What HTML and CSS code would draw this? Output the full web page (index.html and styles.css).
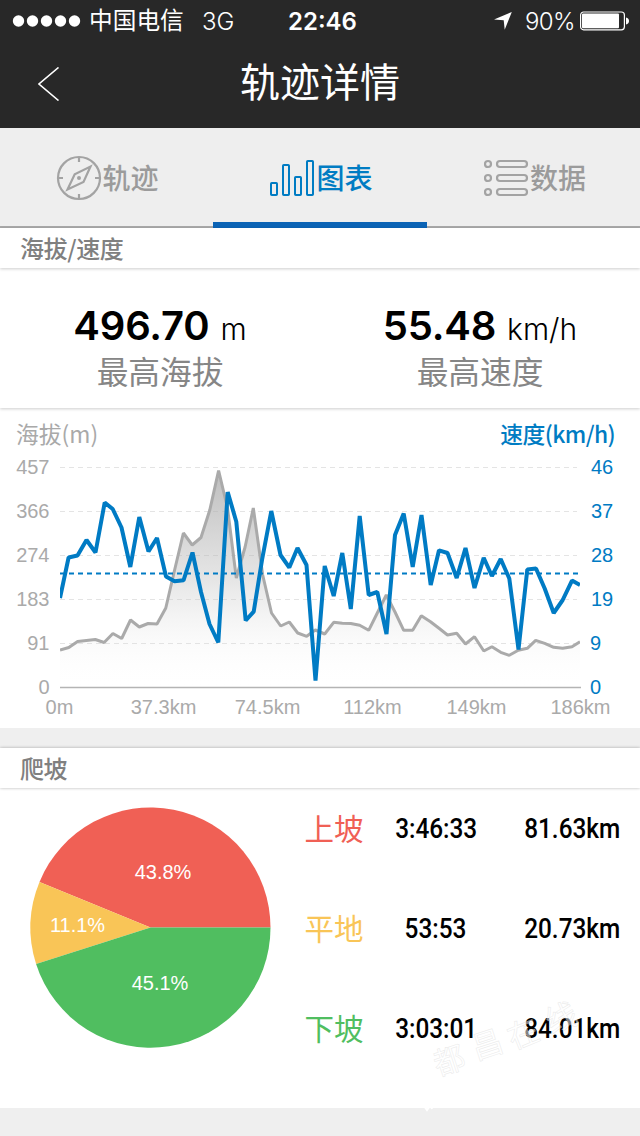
FILE: index.html
```html
<!DOCTYPE html>
<html lang="zh-CN">
<head>
<meta charset="utf-8">
<title>轨迹详情</title>
<link rel="stylesheet" href="styles.css">
</head>
<body>
<div class="app">
  <header class="top">
    <div class="status">
      <svg class="signal" width="70" height="14" viewBox="0 0 70 14" fill="#fff"><circle cx="6.5" cy="7" r="5.7"/><circle cx="20.5" cy="7" r="5.7"/><circle cx="34.5" cy="7" r="5.7"/><circle cx="48.5" cy="7" r="5.7"/><circle cx="62.5" cy="7" r="5.7"/></svg>
      <span class="carrier">中国电信</span>
      <span class="network">3G</span>
      <span class="clock">22:46</span>
      <svg class="location" width="18" height="18" viewBox="0 0 18 18" fill="#fff"><path d="M17.8 0 10.7 17.8 9.7 8.2 0 7.4Z"/></svg>
      <span class="percent">90%</span>
      <svg class="battery" width="50" height="20" viewBox="0 0 50 20"><rect x=".6" y="1" width="43.8" height="17.8" rx="3" fill="none" stroke="#fff" stroke-width="1.2"/><rect x="2" y="2.6" width="37" height="14.6" rx="1" fill="#fff"/><path d="M46 6.5c4 .5 4 6.500 0 7Z" fill="#fff"/></svg>
    </div>
    <div class="nav">
      <svg class="back" width="22" height="34" viewBox="0 0 22 34" fill="none" stroke="#fff" stroke-width="1.6"><path d="M20.500.5 1 17l19.500 16.500"/></svg>
      <h1 class="title">轨迹详情</h1>
    </div>
  </header>

  <nav class="tabs">
    <div class="tab track">
      <svg width="46" height="46" viewBox="0 0 46 46" fill="none" stroke="#a3a3a3" stroke-width="2.200"><circle cx="23" cy="23" r="21"/><path d="M23 2v5M23 44v-5M2 23h5M44 23h-5M34.500 11.500 27.500 27 11.500 34.500 18.700 19.200Z"/><circle cx="23" cy="23" r="2" fill="#a3a3a3" stroke="none"/></svg>
      <span>轨迹</span>
    </div>
    <div class="tab active">
      <svg width="46" height="46" viewBox="0 0 46 46" fill="none" stroke="#007cc3" stroke-width="2"><rect x="1" y="28" width="6" height="12" rx=".8"/><rect x="13" y="10" width="6" height="30" rx=".8"/><rect x="25" y="22" width="6" height="18" rx=".8"/><rect x="37" y="6" width="6" height="34" rx=".8"/></svg>
      <span>图表</span>
    </div>
    <div class="tab">
      <svg width="46" height="46" viewBox="0 0 46 46" fill="none" stroke="#a3a3a3" stroke-width="2.200"><circle cx="4" cy="9" r="3"/><circle cx="4" cy="23" r="3"/><circle cx="4" cy="37" r="3"/><rect x="13" y="6" width="30" height="6" rx="3"/><rect x="13" y="20" width="30" height="6" rx="3"/><rect x="13" y="34" width="30" height="6" rx="3"/></svg>
      <span>数据</span>
    </div>
  </nav>

  <h2 class="section-title">海拔/速度</h2>
  <section class="stats">
    <div class="stat">
      <div class="value"><b>496.70</b><span>m</span></div>
      <div class="label">最高海拔</div>
    </div>
    <div class="stat">
      <div class="value"><b>55.48</b><span>km/h</span></div>
      <div class="label">最高速度</div>
    </div>
  </section>

  <section class="chart">
    <div class="axis-titles"><span>海拔(m)</span><span class="speed">速度(km/h)</span></div>
    <svg class="plot" width="640" height="276" viewBox="0 452 640 276">
      <defs>
        <linearGradient id="fade" gradientUnits="userSpaceOnUse" x1="0" y1="470" x2="0" y2="688">
          <stop offset="0" stop-color="#aaa" stop-opacity=".78"/><stop offset=".5" stop-color="#bbb" stop-opacity=".38"/><stop offset=".8" stop-color="#ddd" stop-opacity=".12"/><stop offset="1" stop-color="#fff" stop-opacity="0"/>
        </linearGradient>
        <clipPath id="area"><rect x="60" y="458" width="520" height="231"/></clipPath>
      </defs>
      <path class="grid" d="M60 467.500H577M60 511.500H577M60 555.500H577M60 599.500H577M60 643.500H577"/>
      <g clip-path="url(#area)">
        <path fill="url(#fade)" d="M60 688V650L68.800 647.500 77.600 641.500 86.400 640.500 95.300 639.500 104.100 642.500 112.900 633.500 121.700 638.500 130.500 620 139.300 627 148.100 623.500 157 624 165.800 608 174.600 570 183.400 533 192.200 545 201 537.500 209.800 510 218.600 470.500 227.500 508 236.300 578 245.100 547 253.300 508 262.700 575 271.500 613 280.700 626 289.300 622 297.700 633 306.700 636.300 315.300 630 324.700 634 333.700 622.300 342.300 623.300 350.800 623.500 359.700 625.300 368.700 630.300 377.300 613 386.300 595 395 612 403.700 630.300 412.700 630.300 421.300 615.800 430.500 621.700 439 628.300 447.500 635 456.700 633.300 465.500 644 474.500 636.700 483.800 651 491.900 646.700 500.700 652.300 509.300 655.300 518.300 650.300 527.300 648.300 535.700 640.300 544.700 643.300 553.700 647.300 562.700 648.300 572 646.700 580 641.700V688Z"/>
        <path class="altitude" d="M60 650 68.800 647.500 77.600 641.500 86.400 640.500 95.300 639.500 104.100 642.500 112.900 633.500 121.700 638.500 130.500 620 139.300 627 148.100 623.500 157 624 165.800 608 174.600 570 183.400 533 192.200 545 201 537.500 209.800 510 218.600 470.500 227.500 508 236.300 578 245.100 547 253.300 508 262.700 575 271.500 613 280.700 626 289.300 622 297.700 633 306.700 636.300 315.300 630 324.700 634 333.700 622.300 342.300 623.300 350.800 623.500 359.700 625.300 368.700 630.300 377.300 613 386.300 595 395 612 403.700 630.300 412.700 630.300 421.300 615.800 430.500 621.700 439 628.300 447.500 635 456.700 633.300 465.500 644 474.500 636.700 483.800 651 491.900 646.700 500.700 652.300 509.300 655.300 518.300 650.300 527.300 648.300 535.700 640.300 544.700 643.300 553.700 647.300 562.700 648.300 572 646.700 580 641.700"/>
        <path class="average" d="M60 573.500H580"/>
        <path class="velocity" d="M60 598 68.600 557.500 77.500 555.500 86.500 540 95.500 552.500 104.700 502.500 112.700 509 121.500 527.500 130.300 567 139.300 517 148.500 551.500 157 538 166 576.500 174.500 581.300 183.500 580.300 192.500 552.500 201 592 209.500 624 218.300 642.500 227.700 492 236.300 521.700 245.700 620.500 253.700 611.700 262.300 558.300 271.300 511 280.500 555 289.300 567.500 297.500 548 306.500 565 315.500 680.500 324.700 566 333.700 596 342.300 553 350.800 609 359.700 516 368.700 595 377.300 592 386.500 634 395 535 403.700 513.500 412.700 567 421.500 515 430.700 585 439 550.300 447.500 553 456.700 578 465.500 548 474.500 588 483.700 557.800 491.900 576 500.700 559 509.300 578.500 518.500 649.500 527.300 569.500 536 568.500 544.700 588.500 553.700 613 562.700 600 572 580.600 580 585"/>
      </g>
      <path class="baseline" d="M60 687.500H581"/>
      <g class="ticks" text-anchor="end"><text x="49.500" y="474">457</text><text x="49.500" y="518">366</text><text x="49.500" y="562">274</text><text x="49.500" y="606">183</text><text x="49.500" y="650">91</text><text x="49.500" y="694">0</text></g>
      <g class="ticks blue"><text x="591" y="474">46</text><text x="591" y="518">37</text><text x="591" y="562">28</text><text x="591" y="606">19</text><text x="590" y="650">9</text><text x="590" y="694">0</text></g>
      <g class="ticks" text-anchor="middle"><text x="59.500" y="714">0m</text><text x="163.500" y="714">37.3km</text><text x="267.500" y="714">74.5km</text><text x="372.500" y="714">112km</text><text x="476.500" y="714">149km</text><text x="580.500" y="714">186km</text></g>
    </svg>
  </section>

  <h2 class="section-title slope-title">爬坡</h2>
  <section class="slope">
    <svg class="pie" width="300" height="320" viewBox="0 788 300 320">
      <path fill="#f06055" d="M150.500 927.500H270.500A120 120 0 0 0 39.500 881.900Z"/>
      <path fill="#f9c557" d="M150.500 927.500 39.500 881.900A120 120 0 0 0 36.100 963.900Z"/>
      <path fill="#50be60" d="M150.500 927.500 36.100 963.900A120 120 0 0 0 270.500 927.500Z"/>
      <g text-anchor="middle"><text x="163" y="879">43.8%</text><text x="77.500" y="932">11.1%</text><text x="160" y="990">45.1%</text></g>
    </svg>
    <div class="rows">
      <div class="row"><span class="kind up">上坡</span><span class="num"><i>3:46:33</i></span><span class="num"><i>81.63km</i></span></div>
      <div class="row"><span class="kind flat">平地</span><span class="num"><i>53:53</i></span><span class="num"><i>20.73km</i></span></div>
      <div class="row"><span class="kind down">下坡</span><span class="num"><i>3:03:01</i></span><span class="num"><i>84.01km</i></span></div>
    </div>
    <svg class="watermark" width="240" height="140" viewBox="400 980 240 140"><g><text transform="translate(438 1076) rotate(-18)">都</text><text transform="translate(476 1060) rotate(-18)">昌</text><text transform="translate(513 1050) rotate(-22)">在</text><text transform="translate(551 1034) rotate(-22)">线</text></g><path d="M424 1106l3 4 3-4M431 1106l1 3" fill="none" stroke="#fff" stroke-width="2"/></svg>
  </section>
</div>
</body>
</html>
```
FILE: styles.css
```css
* { box-sizing: border-box; }
body { margin: 0; background: #efefef; font-family: "Inter", "Noto Sans CJK SC", sans-serif; }
.app { width: 640px; height: 1136px; overflow: hidden; }
.top { height: 128px; background: #282828; color: #fff; }
.status { display: flex; align-items: center; height: 40px; padding: 1px 0 0 12px; font-size: 24px; line-height: 39px; white-space: nowrap; }
.signal { flex: none; }
.carrier { width: 96px; margin-left: 7px; font-family: "Noto Sans CJK SC", sans-serif; font-weight: 400; font-size: 23.700px; line-height: 36px; padding-bottom: 3px; }
.network { width: 86px; margin-left: 17px; font-weight: 300; padding-top: 1px; }
.clock { width: 76px; font-weight: 600; padding-top: 1px; }
.location { flex: none; margin-left: 130px; }
.percent { width: 50px; margin-left: 13px; font-weight: 300; letter-spacing: -.6px; padding-top: 1px; }
.battery { flex: none; margin-left: 5px; }
.nav { display: grid; grid-template-columns: 100px 1fr 100px; align-items: center; height: 88px; }
.back { margin-left: 38px; }
.title { margin: 0; font: 400 40px/80px "Noto Sans CJK SC", sans-serif; text-align: center; padding-bottom: 8px; }
.tabs { display: grid; grid-template-columns: 213px 214px 213px; height: 100px; background: #eee; }
.tab { display: flex; align-items: center; justify-content: center; border-bottom: 2px solid #a9a9a9; color: #9b9b9b; font: 500 28px/40px "Noto Sans CJK SC", sans-serif; padding: 2px 0 0 3px; }
.tab.track { padding-left: 2px; }
.tab.active { border-bottom: 6px solid #0b63b5; color: #007cc3; padding-top: 6px; }
.tab svg { flex: none; display: block; }
.tab span { padding-bottom: 3px; }
.section-title { position: relative; z-index: 1; margin: 0; height: 40px; padding-left: 20px; background: #fff; color: #808080; font: 500 24px/39px "Noto Sans CJK SC", sans-serif; letter-spacing: -.4px; box-shadow: 0 1px 3px rgba(0, 0, 0, .2); }
.stats { position: relative; display: grid; grid-template-columns: 1fr 1fr; height: 140px; padding-top: 34px; background: #fff; box-shadow: 0 1px 3px rgba(0, 0, 0, .2); clip-path: inset(0 0 -6px 0); }
.stat { text-align: center; }
.value { height: 46px; line-height: 48px; white-space: nowrap; color: #000; }
.value b { font-size: 40px; font-weight: 600; letter-spacing: -.2px; }
.value span { font-size: 30px; font-weight: 300; margin-left: 11px; }
.label { height: 44px; color: #868686; font: 400 31.700px/44px "Noto Sans CJK SC", sans-serif; }
.chart { height: 320px; background: #fff; }
.axis-titles { display: flex; justify-content: space-between; height: 44px; padding: 6px 25px 0 16px; color: #a9a9a9; font: 400 22.8px/40px "Noto Sans CJK SC", sans-serif; }
.speed { color: #007cc3; font-weight: 500; letter-spacing: -.6px; }
.plot { display: block; }
.grid { fill: none; stroke: #e4e4e4; stroke-width: 1.200; stroke-dasharray: 5 4; }
.altitude { fill: none; stroke: #aaa; stroke-width: 3; stroke-linejoin: bevel; }
.velocity { fill: none; stroke: #007bc4; stroke-width: 4; stroke-linejoin: bevel; }
.average { fill: none; stroke: #007bc4; stroke-width: 2; stroke-dasharray: 5 4; }
.baseline { fill: none; stroke: #b4b4b4; stroke-width: 1.600; }
.ticks { font: 20px "Liberation Sans", sans-serif; fill: #aaa; }
.ticks.blue { fill: #007bc4; }
.slope-title { margin-top: 20px; box-shadow: 0 0 3px rgba(0, 0, 0, .3); }
.slope { position: relative; display: flex; height: 320px; background: #fff; }
.pie { display: block; flex: none; font: 20px "Liberation Sans", sans-serif; }
.pie text { fill: #fff; }
.rows { flex: 1; padding-top: 11px; }
.row { display: grid; grid-template-columns: 68px 136px 136px; height: 100px; align-items: start; text-align: center; }
.kind { font: 400 29.500px/56px "Noto Sans CJK SC", sans-serif; }
.up { color: #f06055; }
.flat { color: #f9c557; }
.down { color: #50be60; }
.num { height: 60px; font: 500 28px/60px Roboto, sans-serif; color: #000; }
.num i { display: inline-block; font-style: normal; transform: scaleX(.87); }
.watermark { position: absolute; left: 400px; top: 192px; }
.watermark text { font: 31px "Noto Sans CJK SC", sans-serif; fill: #fff; fill-opacity: .5; stroke: #d8d8d8; stroke-opacity: .5; stroke-width: .6; }
```
